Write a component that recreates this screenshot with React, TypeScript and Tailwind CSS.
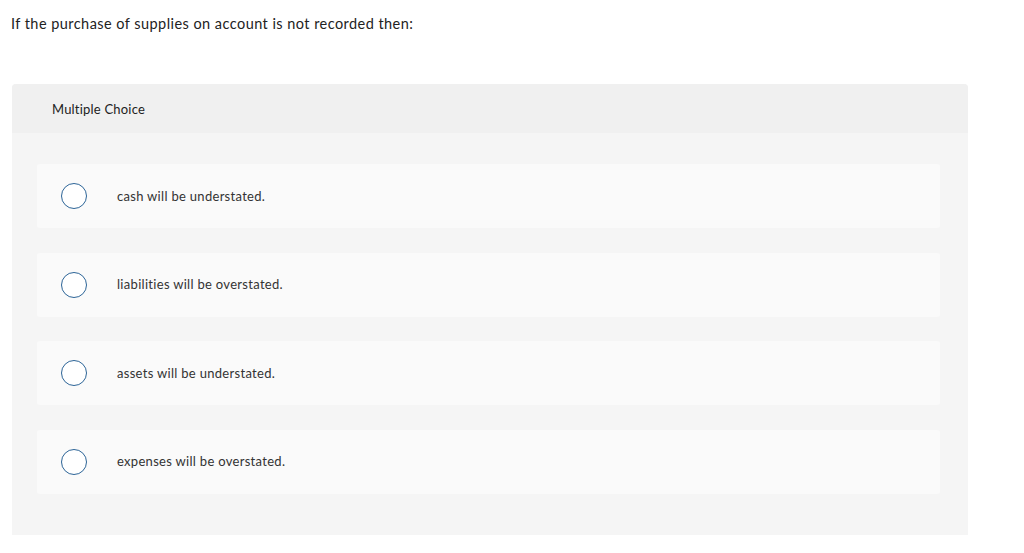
const options = [
  'cash will be understated.',
  'liabilities will be overstated.',
  'assets will be understated.',
  'expenses will be overstated.',
];

export default function App() {
  return (
    <div className="min-h-screen bg-white text-[#333] font-['Lato',sans-serif]">
      <p className="pl-[11px] pt-[15px] text-[14.5px] leading-[18px] tracking-[0.45px] text-[#222]">
        If the purchase of supplies on account is not recorded then:
      </p>

      <div className="ml-[12px] mt-[51px] w-[956px] rounded-t-[4px] bg-[#f5f5f5] pb-[41px]">
        <div className="flex h-[49px] items-center rounded-t-[4px] bg-[#f0f0f0] pl-[40px]">
          <span className="pt-[2px] text-[13px] tracking-[0.2px] text-[#222]">Multiple Choice</span>
        </div>

        <div className="flex flex-col gap-[24.5px] px-[25px] pt-[31px] pr-[28px]">
          {options.map((opt) => (
            <label
              key={opt}
              className="flex h-[64px] cursor-pointer items-center rounded-[3px] bg-[#fafafa]"
            >
              <span className="ml-[24px] h-[26px] w-[26px] shrink-0 rounded-full border border-[#2c6497] bg-white" />
              <span className="ml-[30px] pt-[1px] text-[13px] tracking-[0.3px] text-[#333]">{opt}</span>
            </label>
          ))}
        </div>
      </div>
    </div>
  );
}
